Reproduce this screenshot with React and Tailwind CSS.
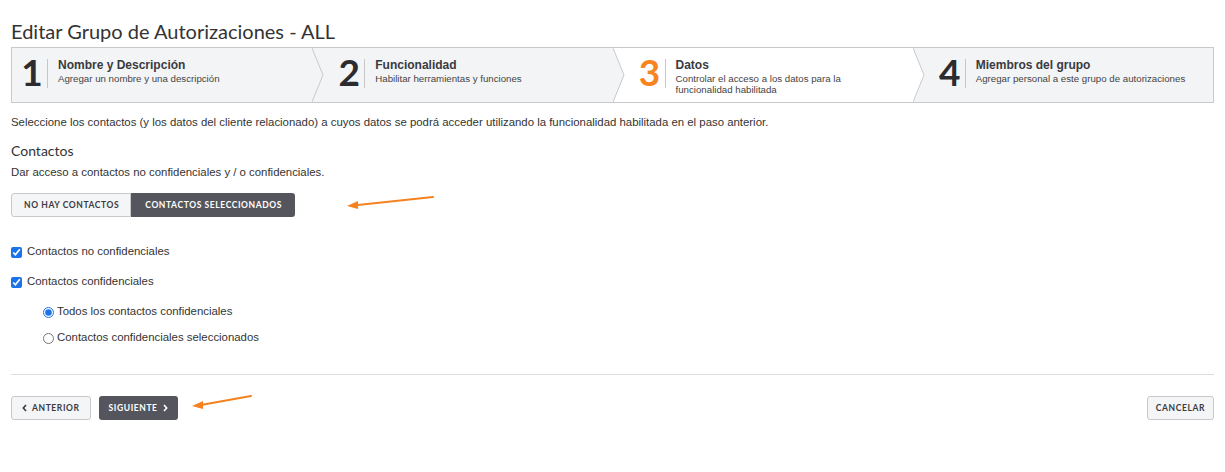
import React from "react";

const steps = [
  { n: "1", title: "Nombre y Descripción", sub: ["Agregar un nombre y una descripción"], active: false },
  { n: "2", title: "Funcionalidad", sub: ["Habilitar herramientas y funciones"], active: false },
  { n: "3", title: "Datos", sub: ["Controlar el acceso a los datos para la", "funcionalidad habilitada"], active: true },
  { n: "4", title: "Miembros del grupo", sub: ["Agregar personal a este grupo de autorizaciones"], active: false },
];

const sans = "font-['Liberation_Sans',Arial,sans-serif]";
const display = "font-['Lato','Open_Sans',sans-serif]";

// chevron drawn at the left edge of a step, filled with the previous step's colour
const Chevron = ({ fill }) => (
  <svg className="absolute left-0 top-0 h-full" width="13" viewBox="0 0 13 54" preserveAspectRatio="none">
    <polygon points="0,0 11,27 0,54" fill={fill} />
    <polyline points="0,0 11,27 0,54" fill="none" stroke="#c9c9cc" strokeWidth="1" />
  </svg>
);

const Step = ({ step, prev, first }) => (
  <div className={`relative flex items-start h-full ${step.active ? "bg-white" : "bg-[#f3f4f6]"} ${first ? "pl-[10px]" : "pl-[27px]"}`}>
    {!first && <Chevron fill={prev.active ? "#ffffff" : "#f3f4f6"} />}
    <div className={`${display} font-bold text-[37px] leading-none w-[20px] mt-[5px] flex justify-center ${step.active ? "text-[#f7841e]" : "text-[#2b2b30]"}`}>
      {step.n}
    </div>
    <div className="w-px h-[29px] bg-[#c7c7c7] ml-[5px] mt-[11px]" />
    <div className={`${sans} ml-[10px] mt-[9px] text-[#333]`}>
      <div className="text-[12px] font-bold leading-[16px] text-[#3a3a3f]">{step.title}</div>
      {step.sub.map((s) => (
        <div key={s} className="text-[9.7px] leading-[11px] text-[#444]">{s}</div>
      ))}
    </div>
  </div>
);

const Arrow = ({ className, x1, y1, x2, y2, w, h }) => (
  <svg className={`absolute ${className}`} width={w} height={h} viewBox={`0 0 ${w} ${h}`}>
    <line x1={x1} y1={y1} x2={x2 + 6} y2={y2 - 0.6} stroke="#f5821f" strokeWidth="2" strokeLinecap="round" />
    <polygon points={`${x2},${y2} ${x2 + 11},${y2 - 5} ${x2 + 11},${y2 + 3}`} fill="#f5821f" />
  </svg>
);

const Caret = ({ dir }) => (
  <svg width="5" height="8" viewBox="0 0 5 8">
    <polyline
      points={dir === "left" ? "4,1 1.3,4 4,7" : "1,1 3.7,4 1,7"}
      fill="none"
      stroke="currentColor"
      strokeWidth="1.6"
    />
  </svg>
);

const btnBase = `${display} font-bold uppercase text-[8.5px] tracking-[0.6px] h-[24px] rounded-[3px] flex items-center`;

export default function App() {
  return (
    <div className={`relative bg-white w-[1225px] h-[472px] text-[#333] ${sans}`}>
      <div className="px-[11px]">
        <h1 className={`${display} text-[20px] leading-[24px] pt-[19px] text-[#333] font-normal`}>
          Editar Grupo de Autorizaciones - ALL
        </h1>

        <div className="mt-[4px] h-[56px] border border-[#c9c9cc] grid grid-cols-4 overflow-hidden">
          {steps.map((s, i) => (
            <Step key={s.n} step={s} prev={steps[i - 1]} first={i === 0} />
          ))}
        </div>

        <p className="mt-[12px] text-[11.4px] leading-[14px]">
          Seleccione los contactos (y los datos del cliente relacionado) a cuyos datos se podrá acceder utilizando la funcionalidad habilitada en el paso anterior.
        </p>

        <h2 className={`${display} mt-[13px] text-[14px] leading-[18px] text-[#333]`}>Contactos</h2>
        <p className="mt-[5px] text-[11.4px] leading-[14px]">Dar acceso a contactos no confidenciales y / o confidenciales.</p>

        <div className="mt-[14px] flex">
          <button className={`${btnBase} pl-[12px] pr-[11px] bg-[#f4f5f7] border border-[#c9c9cc] rounded-r-none text-[#3a3a3f]`}>
            No hay contactos
          </button>
          <button className={`${btnBase} pl-[14px] pr-[13px] bg-[#55555d] text-white rounded-l-none`}>
            Contactos seleccionados
          </button>
        </div>

        <div className="mt-[27px] flex flex-col text-[11.4px]">
          <label className="flex items-center gap-[5px] h-[16px]">
            <input type="checkbox" defaultChecked className="m-0 w-[11px] h-[11px] accent-[#1a73e8]" />
            Contactos no confidenciales
          </label>
          <label className="flex items-center gap-[5px] h-[16px] mt-[14px]">
            <input type="checkbox" defaultChecked className="m-0 w-[11px] h-[11px] accent-[#1a73e8]" />
            Contactos confidenciales
          </label>
          <label className="flex items-center gap-[3px] h-[16px] mt-[14px] ml-[32px]">
            <input type="radio" name="conf" defaultChecked className="m-0 w-[11px] h-[11px] accent-[#1a73e8]" />
            Todos los contactos confidenciales
          </label>
          <label className="flex items-center gap-[3px] h-[16px] mt-[10px] ml-[32px]">
            <input type="radio" name="conf" className="m-0 w-[11px] h-[11px]" />
            Contactos confidenciales seleccionados
          </label>
        </div>

        <div className="mt-[28px] h-px bg-[#dcdcdf]" />

        <div className="mt-[21px] flex items-center">
          <button className={`${btnBase} px-[10px] gap-[5px] bg-[#f4f5f7] border border-[#c9c9cc] text-[#3a3a3f]`}>
            <Caret dir="left" /> Anterior
          </button>
          <button className={`${btnBase} ml-[8px] px-[10px] gap-[5px] bg-[#55555d] text-white`}>
            Siguiente <Caret dir="right" />
          </button>
          <button className={`${btnBase} ml-auto px-[8px] bg-[#f4f5f7] border border-[#c9c9cc] text-[#3a3a3f]`}>
            Cancelar
          </button>
        </div>
      </div>

      <Arrow className="left-[344px] top-[194px]" w={92} h={16} x1={89} y1={3} x2={3} y2={12} />
      <Arrow className="left-[189px] top-[393px]" w={66} h={17} x1={62} y1={3} x2={3} y2={13} />
    </div>
  );
}
